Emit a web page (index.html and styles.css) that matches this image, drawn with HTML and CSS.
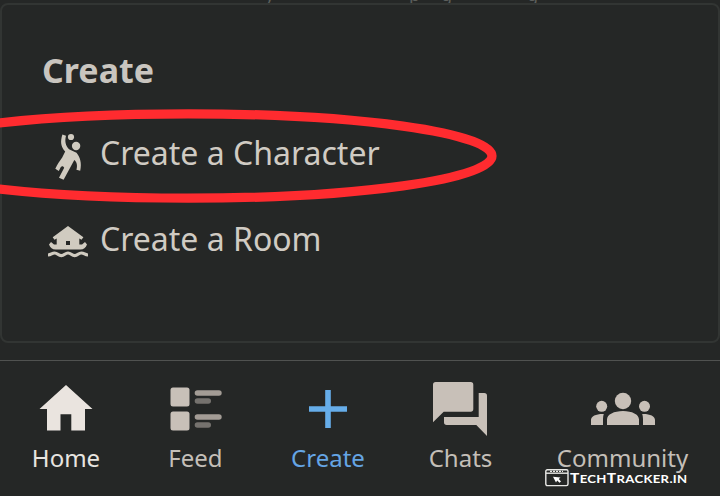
FILE: index.html
```html
<!DOCTYPE html>
<html lang="en">
<head>
<meta charset="utf-8">
<title>Create</title>
<link rel="stylesheet" href="styles.css">
</head>
<body>
<div class="app">
  <div class="behind"><span>y</span><span>p</span><span>g</span><span>g</span></div>
  <main class="sheet">
    <h1>Create</h1>
    <a class="option">
      <svg class="option-icon" viewBox="48 129 40 54">
        <circle cx="71" cy="137" r="3.1"/><circle cx="76.1" cy="146" r="4.2"/>
        <path d="M62.4 134.5L66 135.8C64.6 141 65.4 145.5 69 149.2L76.5 152.8C80 157 82 163 80.2 170.8L76.4 169.8C77.7 165.5 76.8 162 74.3 160.1L71.2 165.8L63.6 179.8L59 177.8L64.2 167.8C63.4 165.8 61.8 165.8 60.7 167.2L58.8 171.1L55.3 168.8C57.5 164 59.5 161 62.2 157.4L65.2 151.6C60.6 146.5 60.2 141.5 62.4 134.5Z"/>
      </svg>
      <span>Create a Character</span>
    </a>
    <a class="option">
      <svg class="option-icon" viewBox="48 215 40 54">
        <path fill-rule="evenodd" d="M68 226L83.4 237.2L81.5 239.8L79.3 238.5V244.4H82L85 242L87 244.4C85.7 247.8 83.6 249.4 80.5 249.4H55.5C52.4 249.4 50.3 247.8 49 244.4L51 242L54 244.4H56.7V238.5L54.5 239.8L52.7 237.2ZM66 241V245H70V241Z"/>
        <path class="wave" d="M48 255C51.3 255 51.7 253 54.7 253S58.1 255.6 61.3 255.6S65 253 68 253S71.6 255.6 74.7 255.6S78.2 253 81.3 253S84.7 255 88 255"/>
      </svg>
      <span>Create a Room</span>
    </a>
  </main>
  <nav class="tabs">
    <a class="tab home">
      <svg viewBox="36 380 60 56"><path d="M66 385L92.5 409H85V430.5H71.3V414.3H60.5V430.5H47V409H39.5Z"/></svg>
      <span>Home</span>
    </a>
    <a class="tab feed">
      <svg viewBox="166 380 60 56">
        <rect x="170.5" y="387.5" width="19" height="19" rx="2.5"/><rect x="170.5" y="411.5" width="19" height="19" rx="2.5"/>
        <g class="line"><rect x="194.7" y="390.2" width="27" height="5.6" rx="2.8"/><rect x="194.7" y="414.2" width="27" height="5.6" rx="2.8"/></g>
        <g class="subline"><rect x="194.7" y="398.2" width="16.3" height="5.6" rx="2.8"/><rect x="194.7" y="422.2" width="16.3" height="5.6" rx="2.8"/></g>
      </svg>
      <span>Feed</span>
    </a>
    <a class="tab create">
      <svg viewBox="298 380 60 56"><path d="M325.2 390H330.8V406.2H347V411.8H330.8V428H325.2V411.8H309V406.2H325.2Z"/></svg>
      <span>Create</span>
    </a>
    <a class="tab chats">
      <svg viewBox="431 380 60 56"><path d="M435.7 382H470.7Q473.3 382 473.3 384.7V409Q473.3 411.7 470.7 411.7H443.7L433 422.3V384.7Q433 382 435.7 382ZM478.7 393H484.2Q487 393 487 395.7V436L476.3 425H446.7Q444 425 444 422.3V417H478.7Z"/></svg>
      <span>Chats</span>
    </a>
    <a class="tab community">
      <svg viewBox="592 380 60 56">
        <circle cx="623" cy="401" r="8.2"/><circle cx="601.7" cy="406.3" r="5.5"/><circle cx="644.5" cy="406.3" r="5.5"/>
        <path d="M607 425V419.5C607 414.5 614 411 623 411S639 414.5 639 419.5V425ZM591 425V420C591 416 596.5 413.7 603.8 414Q603 416 603 419V425ZM655 425V420C655 416 649.5 413.7 642.2 414Q643 416 643 419V425Z"/>
      </svg>
      <span>Community</span>
    </a>
  </nav>
  <svg class="marker" viewBox="0 0 720 496"><ellipse cx="188" cy="156" rx="304" ry="42.2"/></svg>
  <div class="watermark">
    <svg viewBox="0 0 24 18">
      <rect class="frame" x=".8" y=".8" width="22.2" height="15.8" rx="1.5"/>
      <path class="frame" d="M1 4.2H23"/><path class="dots" d="M5 2.4H18"/>
      <path d="M8 7.8L15.5 8.4L13.8 10L16 12.5L14.5 13.8L12.2 11.6L11 13.4Z"/>
    </svg>
    <span class="brand"><b>T</b>ECH<b>T</b>RACKER.IN</span>
  </div>
</div>
</body>
</html>
```

FILE: styles.css
```css
* { box-sizing: border-box; }
body { margin: 0; background: #252726; font-family: "Noto Sans", sans-serif; }
.app { position: relative; width: 720px; height: 496px; overflow: hidden; display: flex; flex-direction: column; }
.behind { height: 3px; overflow: hidden; display: flex; padding-left: 265px; color: #5c5f5c; font-size: 18px; line-height: 1; }
.behind span { margin-top: -15px; width: 35px; flex: none; }
.behind span:first-child { width: 144px; }
.behind span:nth-child(3) { width: 86px; }
.behind span:nth-child(2) { width: 32px; }
.sheet { height: 340px; border: 2px solid #323533; border-radius: 8px; padding: 41px 40px; color: #d0cbc3; }
h1 { margin: 0 0 35px; font-size: 34px; line-height: 48px; font-weight: 700; color: #c9c5bf; }
.option { display: flex; align-items: center; height: 54px; margin: 0 0 32px 6px; gap: 12px; font-size: 32px; line-height: 54px; white-space: nowrap; }
.option span { margin-top: -7px; }
.option svg { width: 40px; height: 54px; flex: none; fill: #d0cbc0; }
.option .wave { fill: none; stroke: #d0cbc0; stroke-width: 3.2; }
.tabs { margin-top: 17px; border-top: 1px solid #505250; height: 136px; display: grid; grid-template-columns: 132px 127px 138px 127px 196px; }
.tab { display: flex; flex-direction: column; align-items: center; padding-top: 19px; font-size: 24px; line-height: 44px; color: #c4bfb8; fill: #c8c0b8; }
.tab svg { width: 60px; height: 56px; overflow: visible; }
.home { color: #e8e5e0; fill: #eae4df; }
.create { color: #65a5e4; fill: #66ade9; }
.community span { padding-left: 1px; }
.line { fill: #a39c95; }
.subline { fill: #75726e; }
.marker { position: absolute; inset: 0; width: 720px; height: 496px; pointer-events: none; fill: none; stroke: #ff2b2f; stroke-width: 9.2; }
.watermark { position: absolute; left: 545px; top: 467px; display: flex; align-items: center; gap: 1px; color: #fff; font: 700 11.5px/20px Lato, sans-serif; }
.watermark svg { width: 24px; height: 18px; fill: #fff; }
.brand { transform: translateY(1px) scaleX(1.14); transform-origin: left; letter-spacing: .3px; white-space: nowrap; }
.brand b { font-size: 13.5px; }
.watermark .frame { fill: none; stroke: #e8e8e5; stroke-width: 1.4; }
.watermark .dots { fill: none; stroke: #e8e8e5; stroke-width: 1.2; stroke-dasharray: 2 1; }
```
